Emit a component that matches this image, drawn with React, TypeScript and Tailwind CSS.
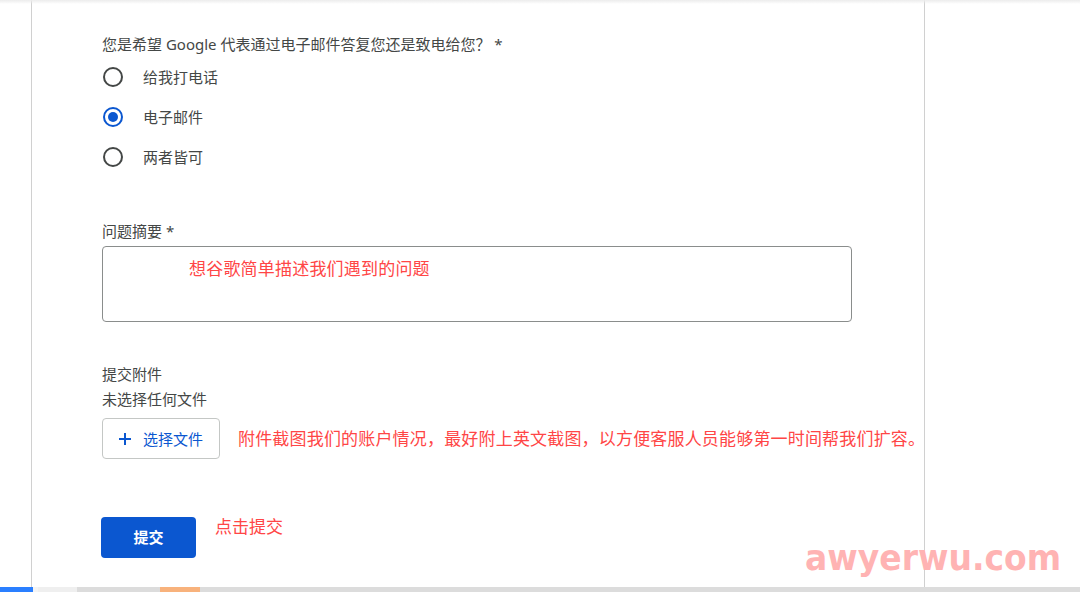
import React from "react";

const font = { fontFamily: '"Noto Sans", "Noto Sans CJK SC", Roboto, sans-serif' };

function Radio({ checked, label }: { checked?: boolean; label: string }) {
  return (
    <div className="flex items-center h-[40px]">
      <div
        className={
          "w-[20px] h-[20px] rounded-full border-2 flex items-center justify-center ml-[1px] " +
          (checked ? "border-[#0b57d0]" : "border-[#444746]")
        }
      >
        {checked && <div className="w-[10px] h-[10px] rounded-full bg-[#0b57d0]" />}
      </div>
      <span className="ml-[20px] text-[15px] leading-5 text-[#444746]">{label}</span>
    </div>
  );
}

export default function App() {
  return (
    <div className="relative w-[1080px] h-[592px] bg-white overflow-hidden flex flex-col" style={font}>
      <div className="flex flex-1 min-h-0">
        <div className="w-[31px] shrink-0" />
        <div className="w-[894px] shrink-0 border-l border-r border-[#d0d0d0] pl-[70px] pt-[34px] flex flex-col">
          <div className="text-[15px] leading-5 text-[#444746] whitespace-nowrap">
            您是希望 Google 代表通过电子邮件答复您还是致电给您？ *
          </div>
          <div className="mt-[3px] flex flex-col">
            <Radio label="给我打电话" />
            <Radio checked label="电子邮件" />
            <Radio label="两者皆可" />
          </div>
          <div className="mt-[44px] text-[15px] leading-5 text-[#444746]">问题摘要 *</div>
          <div className="mt-[5px] w-[750px] h-[76px] rounded-[4px] border border-[#8a8d8c] pl-[86px] pt-[10px]">
            <span className="text-[17px] leading-6 tracking-[0.2px] text-[#ff4646]">想谷歌简单描述我们遇到的问题</span>
          </div>
          <div className="mt-[42px] text-[15px] leading-5 text-[#444746]">提交附件</div>
          <div className="mt-[5px] text-[15px] leading-5 text-[#444746]">未选择任何文件</div>
          <div className="mt-[9px] flex items-center">
            <div className="shrink-0 w-[118px] h-[41px] rounded-[4px] border border-[#c4c7c5] flex items-center pl-[15px] text-[#0b57d0]">
              <svg width="14" height="14" viewBox="0 0 14 14" className="shrink-0">
                <path d="M7 1v12M1 7h12" stroke="#0b57d0" strokeWidth="2" />
              </svg>
              <span className="ml-[11px] text-[15px] leading-5">选择文件</span>
            </div>
            <span className="ml-[18px] text-[17px] leading-6 tracking-[0.18px] text-[#ff4646] whitespace-nowrap">
              附件截图我们的账户情况，最好附上英文截图，以方便客服人员能够第一时间帮我们扩容。
            </span>
          </div>
          <div className="mt-[58px] flex items-start">
            <div className="shrink-0 w-[95px] h-[41px] rounded-[4px] bg-[#0b57d0] flex items-center justify-center text-white text-[15px] font-bold -ml-[1px]">
              提交
            </div>
            <span className="ml-[19px] mt-[-2px] text-[17px] leading-6 text-[#ff4646]">点击提交</span>
          </div>
        </div>
        <div className="flex-1" />
      </div>
      <div className="h-[5px] flex shrink-0">
        <div className="w-[33px] bg-[#2a7fff]" />
        <div className="w-[5px] bg-[#f4f4f4]" />
        <div className="w-[39px] bg-[#efefef]" />
        <div className="w-[83px] bg-[#dcdcdc]" />
        <div className="w-[40px] bg-[#f8b27c]" />
        <div className="flex-1 bg-[#dcdcdc]" />
      </div>
      <div className="absolute top-0 left-0 right-0 h-[4px] bg-gradient-to-b from-[#ececec] to-transparent" />
      <div
        className="absolute left-[805px] top-[542px] text-[33px] font-bold text-[#ffb3b3] leading-none scale-y-110 origin-bottom-left"
        style={{ fontFamily: '"DejaVu Sans", sans-serif' }}
      >
        awyerwu.com
      </div>
    </div>
  );
}
